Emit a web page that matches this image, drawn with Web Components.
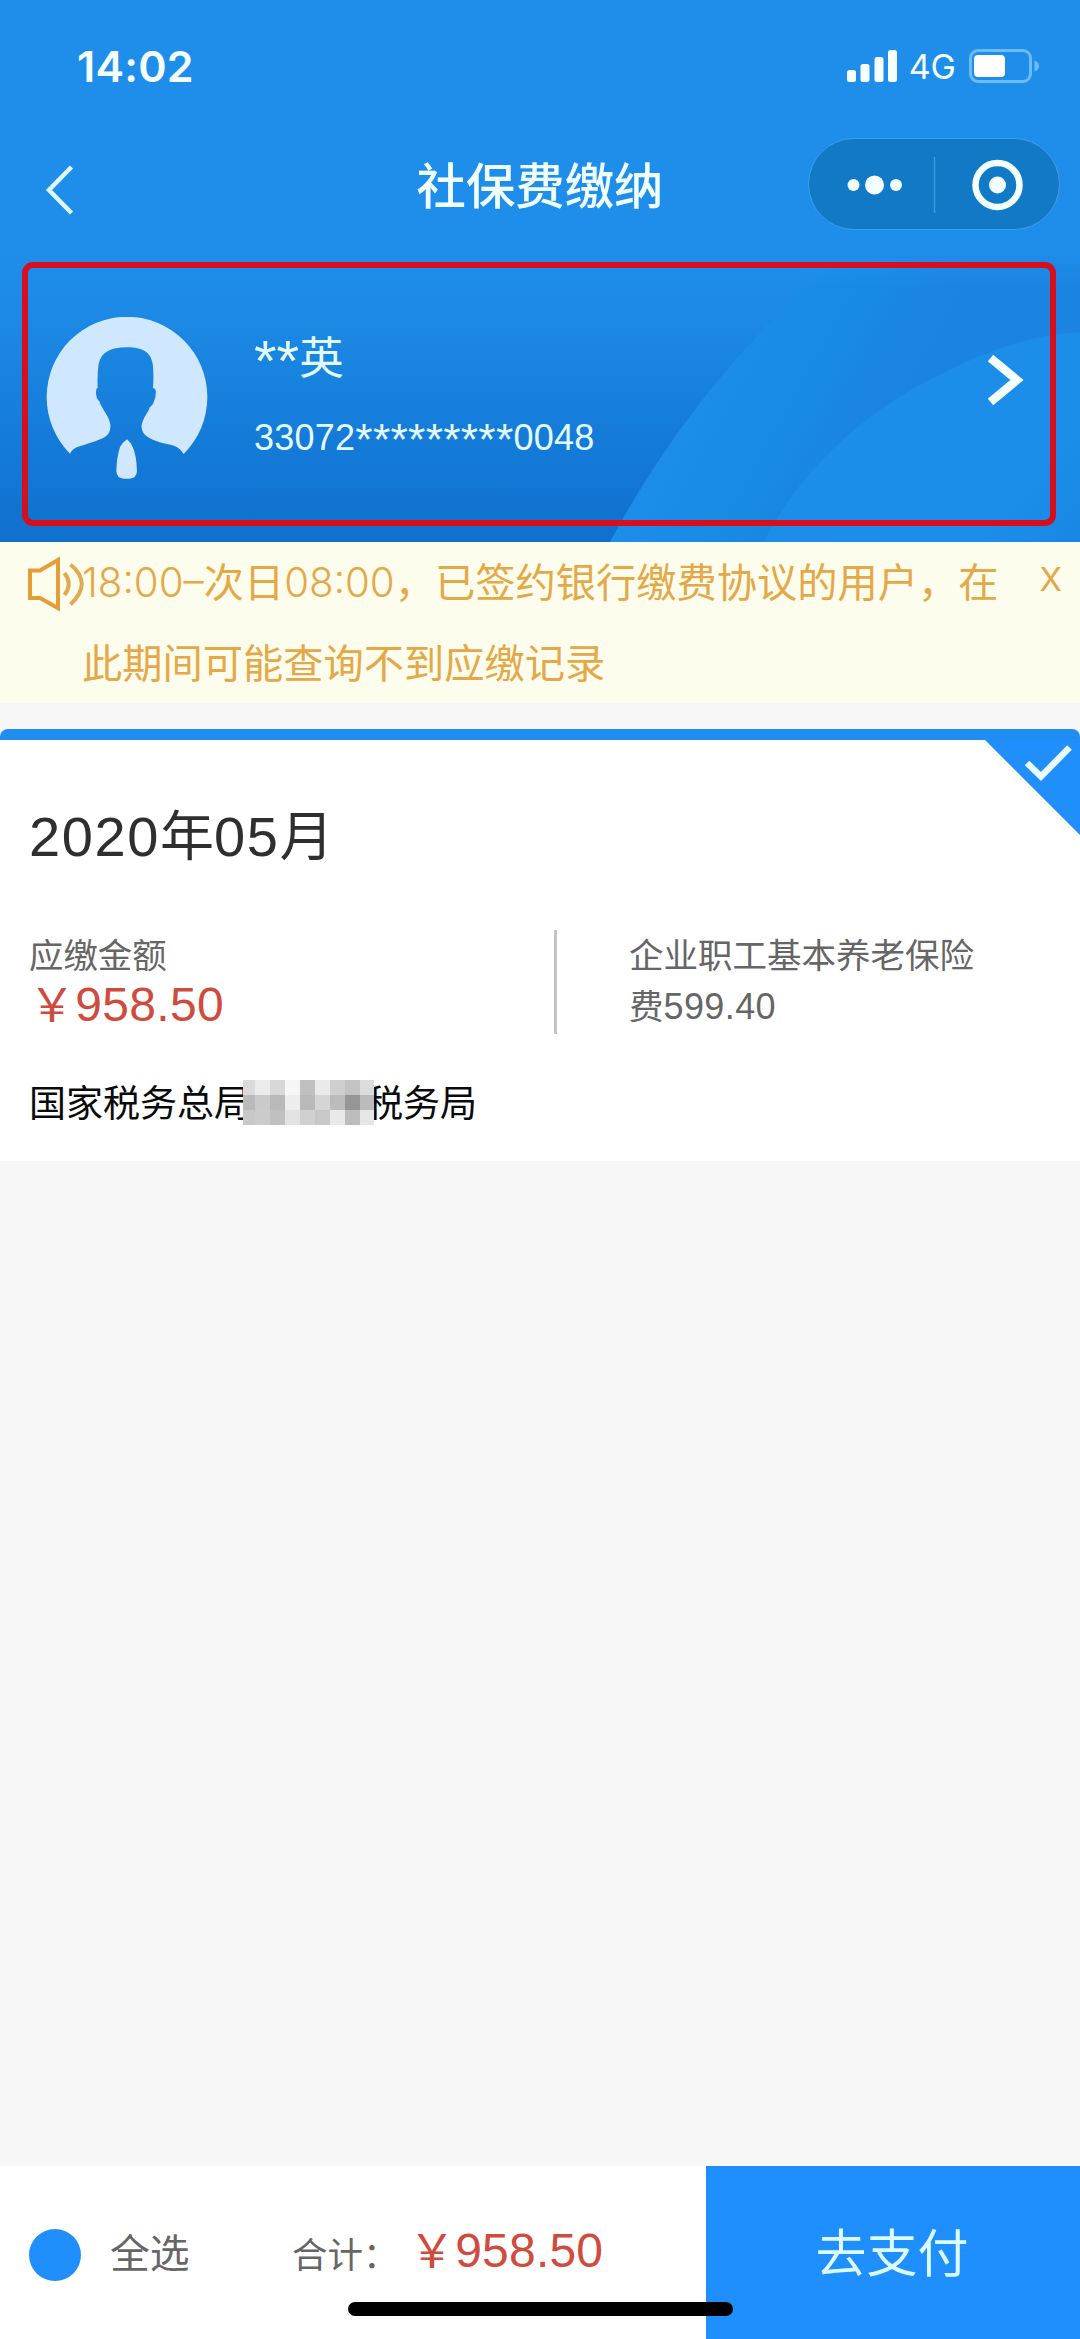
<!DOCTYPE html>
<html lang="zh-CN">
<head>
<meta charset="utf-8">
<title>社保费缴纳</title>
<style>
html,body{margin:0;padding:0}
body{width:1080px;height:2339px;overflow:hidden;background:#f7f7f8;font-family:"Liberation Sans","Noto Sans CJK SC",sans-serif}
</style>
</head>
<body>
<pay-page></pay-page>
<script>
function define(name, html) {
  const t = document.createElement('template');
  t.innerHTML = html;
  customElements.define(name, class extends HTMLElement {
    constructor() {
      super();
      this.attachShadow({ mode: 'open' }).appendChild(t.content.cloneNode(true));
    }
  });
}

define('status-bar', `
<style>
:host{display:flex;height:138px;box-sizing:border-box;padding:0 40px 6px 77px;align-items:center;justify-content:space-between;color:#f4ffff}
.time{font:600 43px/60px Inter,sans-serif;letter-spacing:.2px}
.right{display:flex;align-items:center}
.net{font:400 34px/50px Inter,sans-serif;margin:2px 13px 0 12px}
svg{display:block}
</style>
<span class="time">14:02</span>
<div class="right">
<svg width="50" height="32" viewBox="0 0 50 32" fill="#f8ffff"><rect x="0" y="20" width="9" height="12" rx="2.500"/><rect x="13.500" y="14" width="9" height="18" rx="2.500"/><rect x="27.500" y="7" width="9" height="25" rx="2.500"/><rect x="41" y="0" width="9" height="32" rx="2.500"/></svg>
<span class="net">4G</span>
<svg width="71" height="34" viewBox="0 0 71 34"><rect x="1.500" y="1.500" width="60" height="31" rx="7.500" fill="none" stroke="#6cbcf8" stroke-width="3"/><rect x="5" y="6" width="31" height="22" rx="4" fill="#fff"/><path d="M65.500 11.500q4.500 1.500 4.500 5.500t-4.500 5.500z" fill="#6cbcf8"/></svg>
</div>`);

define('mini-capsule', `
<style>
:host{display:flex;width:252px;height:92px;box-sizing:border-box;border:1.500px solid #3f9de6;border-radius:46px;background:#1279c6;align-items:center}
svg{display:block}
</style>
<svg width="249" height="89" viewBox="0 0 249 89"><g fill="#f2feff"><circle cx="44.500" cy="45" r="6"/><circle cx="65.500" cy="45" r="9.500"/><circle cx="87" cy="45" r="6"/></g><path d="M125.500 17V73" stroke="#3c98df" stroke-width="1.500"/><circle cx="188.500" cy="45" r="22" fill="none" stroke="#f2feff" stroke-width="6.500"/><circle cx="188.500" cy="45" r="8.500" fill="#f2feff"/></svg>`);

define('nav-bar', `
<style>
:host{display:grid;grid-template-columns:1fr auto 1fr;height:92px;padding:0 20px;align-items:center}
.title{font-size:49.400px;line-height:60px;font-weight:500;color:#f0ffff;padding-top:5px}
mini-capsule{justify-self:end}
svg{display:block;margin:12px 0 0 25px}
</style>
<svg width="30" height="50" viewBox="0 0 30 50"><path d="M26.500 2L4 25L26.500 48" fill="none" stroke="#dcfaff" stroke-width="4.500"/></svg>
<span class="title"><slot></slot></span>
<mini-capsule></mini-capsule>`);

define('user-avatar', `
<style>:host{display:block;width:162px;height:162px}svg{display:block}</style>
<svg width="162" height="162" viewBox="48 50 486 486" fill="#cfe8ff">
<path d="M120 460A241 241 0 1 1 461 461Q452 444 432 436C405 430 372 424 350 408Q333 396 335 374C340 350 354 338 360 320Q370 314 373 300Q379 285 377 270Q376 264 369 263Q372 220 368 190C362 156 340 141 290 141C240 141 214 156 206 190Q201 225 203 262Q198 264 198 276Q198 296 208 303C214 325 236 344 241 372Q243 396 228 408C202 424 165 432 142 440Q126 446 120 460Z"/>
<path d="M291 417Q302 426 308 440Q319 462 321 512Q320 534 298 535H282Q260 534 259 512Q260 470 270 440Q278 426 291 417Z"/>
</svg>`);

define('user-card', `
<style>
:host{display:flex;box-sizing:border-box;width:1034px;height:264px;margin:32px 0 0 22px;border:6px solid #d50f1c;border-radius:11px;padding:0 26px 0 18px;align-items:flex-start}
user-avatar{margin-top:49px}
.text{flex:1;padding:61px 0 0 46px;color:#e2fbff}
.name{font-size:44.500px;line-height:60px}
.id{font-size:36px;line-height:50px;margin-top:24px;letter-spacing:.25px}
.stars{line-height:0}
.name .stars{font-size:58px;vertical-align:-7px}
.id .stars{font-size:44.500px;vertical-align:-5px}
.arrow{display:block;margin-top:85px}
</style>
<user-avatar></user-avatar>
<div class="text">
<div class="name"><span class="stars">**</span>英</div>
<div class="id">33072<span class="stars">*********</span>0048</div>
</div>
<svg class="arrow" width="36" height="54" viewBox="0 0 36 54"><path d="M2.500 5L29 27L2.500 49" fill="none" stroke="#f4ffff" stroke-width="8.500"/></svg>`);

define('page-header', `
<style>
:host{display:block;position:relative;height:541.500px;background:linear-gradient(#1e8eea 0,#1e8eea 255px,#1a86e2 350px,#157cda 430px,#1070cd 541px);overflow:hidden}
.waves{position:absolute;left:0;top:0}
.content{position:relative}
</style>
<svg class="waves" width="1080" height="542" viewBox="0 0 1080 542">
<defs>
<linearGradient id="a" gradientUnits="userSpaceOnUse" x1="690" y1="400" x2="850" y2="490"><stop offset="0" stop-color="#1c8eea"/><stop offset=".5" stop-color="#188ae4"/><stop offset="1" stop-color="#1b84e0"/></linearGradient>
<linearGradient id="b" gradientUnits="userSpaceOnUse" x1="900" y1="400" x2="1060" y2="541"><stop offset="0" stop-color="#1c8eea"/><stop offset=".7" stop-color="#1b8eea"/><stop offset="1" stop-color="#1988e4"/></linearGradient>
<linearGradient id="c" x1="0" y1="0" x2="0" y2="1"><stop offset="0" stop-color="#1e8eea"/><stop offset="1" stop-color="#1e8eea" stop-opacity="0"/></linearGradient>
</defs>
<path d="M610 542Q683 405 793 300Q815 278 845 255H1080V542Z" fill="url(#a)"/>
<path d="M764 542C800 470 870 405 950 370Q1015 336 1080 332V542Z" fill="url(#b)"/>
<rect x="800" y="250" width="280" height="40" fill="url(#c)"/>
</svg>
<div class="content">
<status-bar></status-bar>
<nav-bar>社保费缴纳</nav-bar>
<user-card></user-card>
</div>`);

define('notice-bar', `
<style>
:host{display:flex;height:161px;box-sizing:border-box;background:#fcfdec;color:#e5a848;padding:0 18px 0 27px;align-items:flex-start;font-family:Inter,"Noto Sans CJK SC",sans-serif}
svg{display:block;margin-top:14px;flex:none}
.msg{flex:1;font-size:40.250px;line-height:81px;white-space:nowrap;margin-left:-2px}
.n{font-weight:300}
.x{font-size:33px;line-height:40px;margin-top:17px}
</style>
<svg width="57" height="56" viewBox="0 0 57 56" fill="none" stroke="#e69c37" stroke-width="4"><path d="M3 14.500H13L31 4V52L13 42H3Z"/><path d="M37.500 17Q46 28 37.500 39M43.500 8.500Q66 27 43.500 48.500" stroke="#dfaa50"/></svg>
<div class="msg"><span class="n">18:00–</span>次日<span class="n">08:00</span>，已签约银行缴费协议的用户，在<br>此期间可能查询不到应缴记录</div>
<span class="x">X</span>`);

define('pixel-mask', `
<style>:host{display:block;width:131px;height:45px}svg{display:block}</style>
<svg width="131" height="45" viewBox="0 0 131 45" shape-rendering="crispEdges"></svg>`);

define('bill-card', `
<style>
:host{display:block;position:relative;margin-top:26.500px;height:432px;box-sizing:border-box;background:#fff;border-top:11px solid #208df2;border-radius:8px 8px 0 0;padding:56.500px 30px 0 29px}
.corner{position:absolute;right:0;top:-1px;display:block}
.month{font-size:56px;line-height:80px;color:#2f2f2f;letter-spacing:1.600px}
.cjk{font-size:54px;letter-spacing:0}
.row{display:flex;margin-top:53px;height:104px;align-items:stretch}
.left{width:525px;padding-top:1px;box-sizing:border-box;line-height:50px}
.label{font-size:34.400px;color:#666}
.amt{font-size:48px;line-height:48px;color:#cf4b3e;letter-spacing:.3px}
.amt span{font-size:46px}
.rule{width:3px;background:#c4c4c4}
.right{flex:none;padding:1px 0 0 72px;font-size:34.500px;line-height:51.500px;color:#666}
.right span{font-size:36px;line-height:0;letter-spacing:.4px}
.office{display:flex;align-items:center;position:relative;font-size:37px;line-height:46px;margin-top:48px;color:#0a0a0a}
.gap{width:115px}
pixel-mask{position:absolute;left:214px;top:-2px}
</style>
<svg class="corner" width="96" height="97" viewBox="0 0 96 97"><path d="M0 0H96V96Z" fill="#208ffc"/><path d="M43 24.500L57 38L85.500 9" transform="translate(0 -.5)" fill="none" stroke="#e9fbff" stroke-width="6.500"/></svg>
<div class="month">2020<span class="cjk">年</span>05<span class="cjk">月</span></div>
<div class="row">
<div class="left"><div class="label">应缴金额</div><div class="amt"><span>￥</span>958.50</div></div>
<div class="rule"></div>
<div class="right">企业职工基本养老保险<br>费<span>599.40</span></div>
</div>
<div class="office">国家税务总局<i class="gap"></i>税务局<pixel-mask></pixel-mask></div>`);

define('pay-bar', `
<style>
:host{display:flex;height:173px;background:#fff;position:relative;align-items:stretch;color:#666}
.sum{display:flex;align-items:center;width:706px;box-sizing:border-box;padding-left:29px}
.dot{width:52px;height:52px;border-radius:50%;background:#208ffc;margin-top:5px;flex:none}
.all{font-size:39.800px;line-height:60px;margin:3px 0 0 29px;width:182px}
.tot{font-size:35.500px;line-height:60px;margin-top:7px;width:117px}
.amt{font-size:48px;line-height:60px;color:#cf4b3e;margin-top:-4px;white-space:nowrap;letter-spacing:.2px}
.amt span{font-size:46px}
.btn{flex:1;display:flex;align-items:center;justify-content:center;background:#208ffe;color:#dcfbff;font-size:51px;padding:0 2px 5px 0}
.home{position:absolute;left:348px;top:136px;width:385px;height:14px;border-radius:7px;background:#000}
</style>
<div class="sum"><div class="dot"></div><span class="all">全选</span><span class="tot">合计：</span><span class="amt"><span>￥</span>958.50</span></div>
<div class="btn">去支付</div>
<div class="home"></div>`);

define('pay-page', `
<style>:host{display:flex;flex-direction:column;width:1080px;height:2339px;background:#f7f7f8}pay-bar{margin-top:auto}page-header,notice-bar,bill-card,pay-bar{flex:none}</style>
<page-header></page-header>
<notice-bar></notice-bar>
<bill-card></bill-card>
<pay-bar></pay-bar>`);

(function fillMask() {
  const rows = [
    ['#dadada','#ebebeb','#d8d8d8','#f6f6f6','#c0c0c0','#eaeaea','#cfcfcf','#c3c3c3','#dcdcdc'],
    ['#bababa','#cacaca','#b9b9b9','#ededed','#b9b9b9','#d5d5d5','#bcbcbc','#969696','#bbbbbb'],
    ['#c8c8c8','#cbcbcb','#c0c0c0','#e3e3e3','#d0d0d0','#c8c8c8','#e9e9e9','#bdbdbd','#e6e6e6']
  ];
  const xs = [0, 12, 27, 42, 57, 72, 87, 102, 117, 131];
  const card = document.querySelector('pay-page').shadowRoot.querySelector('bill-card');
  const svg = card.shadowRoot.querySelector('pixel-mask').shadowRoot.querySelector('svg');
  svg.innerHTML = rows.map((r, y) => r.map((c, i) =>
    `<rect x="${xs[i]}" y="${y * 15}" width="${xs[i + 1] - xs[i]}" height="15" fill="${c}"/>`).join('')).join('');
})();
</script>
</body>
</html>
